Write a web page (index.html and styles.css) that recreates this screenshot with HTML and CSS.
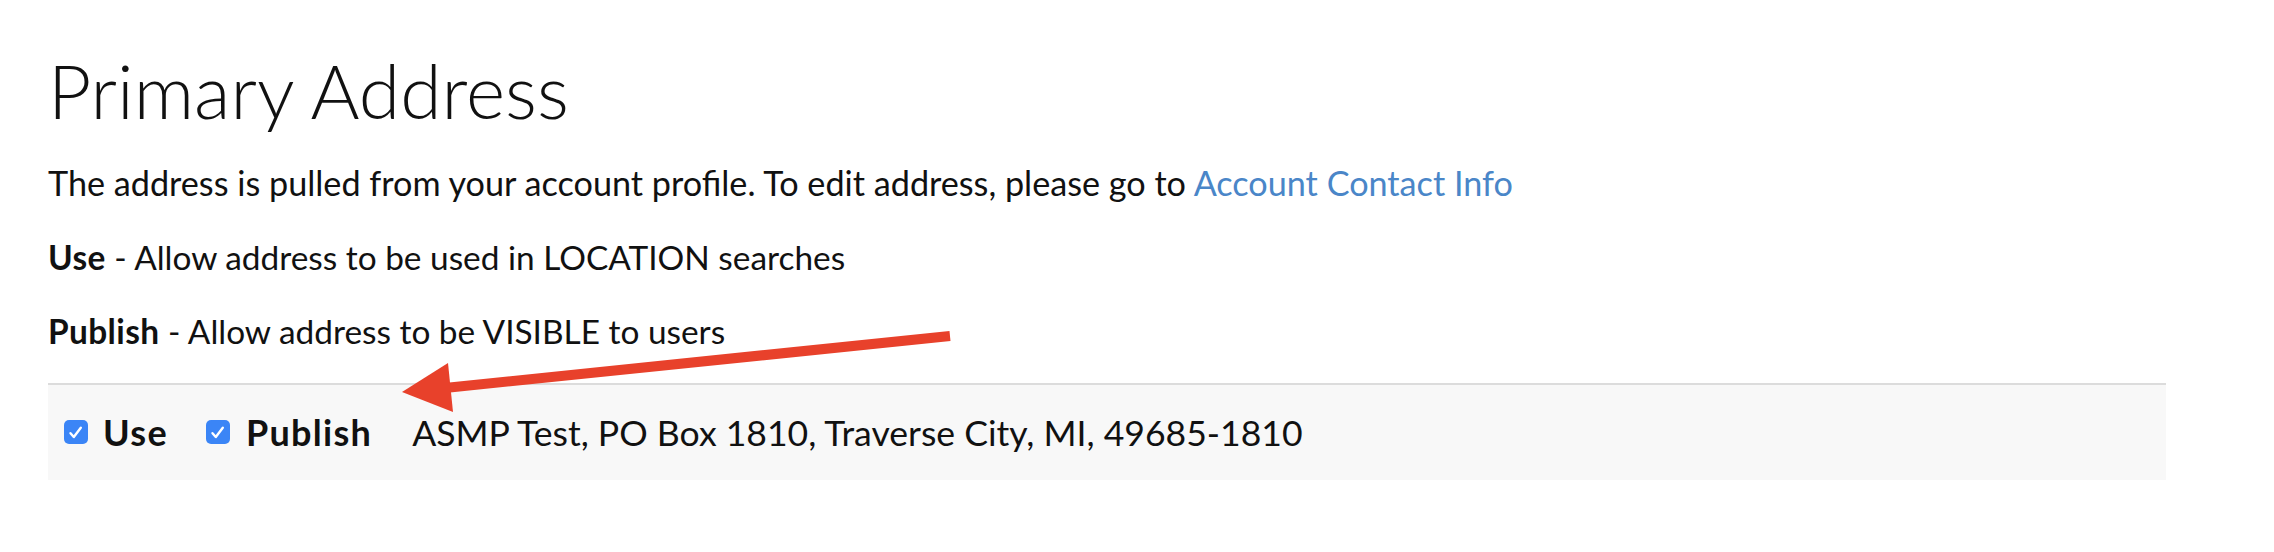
FILE: index.html
```html
<!DOCTYPE html>
<html lang="en">
<head>
<meta charset="utf-8">
<title>Primary Address</title>
<link rel="stylesheet" href="styles.css">
</head>
<body>
<div class="page">
  <h1 class="title">Primary Address</h1>
  <p class="note">The address is pulled from your account profile. To edit address, please go to <a class="link" href="#">Account Contact Info</a></p>
  <p class="note"><strong>Use</strong> - Allow address to be used in LOCATION searches</p>
  <p class="note"><strong>Publish</strong> - Allow address to be VISIBLE to users</p>
  <div class="address-row">
    <label class="opt">
      <span class="check"><svg viewBox="0 0 24 24" width="24" height="24"><path d="M6.5 13.2 L9.8 17 L16.8 7.8" fill="none" stroke="#fff" stroke-width="2.4" stroke-linecap="round" stroke-linejoin="round"/></svg></span>
      <span class="opt-label">Use</span>
    </label>
    <label class="opt">
      <span class="check"><svg viewBox="0 0 24 24" width="24" height="24"><path d="M6.5 13.2 L9.8 17 L16.8 7.8" fill="none" stroke="#fff" stroke-width="2.4" stroke-linecap="round" stroke-linejoin="round"/></svg></span>
      <span class="opt-label">Publish</span>
    </label>
    <span class="addr">ASMP Test, PO Box 1810, Traverse City, MI, 49685-1810</span>
  </div>
  <svg class="arrow" width="2274" height="552" viewBox="0 0 2274 552">
    <line x1="440" y1="388.5" x2="950" y2="336" stroke="#e8412b" stroke-width="10"/>
    <polygon points="402,392 448,363 453,412" fill="#e8412b"/>
  </svg>
</div>
</body>
</html>
```

FILE: styles.css
```css
* { box-sizing: border-box; }
html, body { margin: 0; padding: 0; background: #fff; }
body {
  font-family: "Lato", "Liberation Sans", sans-serif;
  color: #111;
}
.page {
  position: relative;
  width: 2274px;
  height: 552px;
  padding: 46px 108px 0 48px;
}
.title {
  margin: 0;
  font-size: 75px;
  line-height: 88px;
  font-weight: 300;
  color: #111;
}
.note {
  margin: 26px 0 0;
  font-size: 33.4px;
  line-height: 48px;
}
.note:first-of-type { margin-top: 25px; font-size: 34.2px; }
.note strong { font-weight: 700; letter-spacing: 0.4px; }
.link { color: #4a86c8; text-decoration: none; }
.address-row {
  display: flex;
  align-items: center;
  margin-top: 28px;
  height: 97px;
  padding: 0 0 1px 16px;
  border-top: 2px solid #dcdcdc;
  background: #f8f8f8;
}
.opt {
  display: flex;
  align-items: center;
  gap: 15px;
  margin-right: 38px;
}
.opt + .opt { gap: 16px; margin-right: 40px; }
.check {
  width: 24px;
  height: 24px;
  border-radius: 5px;
  background: #3b85f6;
  display: flex;
}
.opt-label {
  font-size: 36px;
  font-weight: 700;
  letter-spacing: 1.3px;
}
.addr {
  font-size: 35.6px;
}
.arrow {
  position: absolute;
  left: 0;
  top: 0;
  pointer-events: none;
}
```
